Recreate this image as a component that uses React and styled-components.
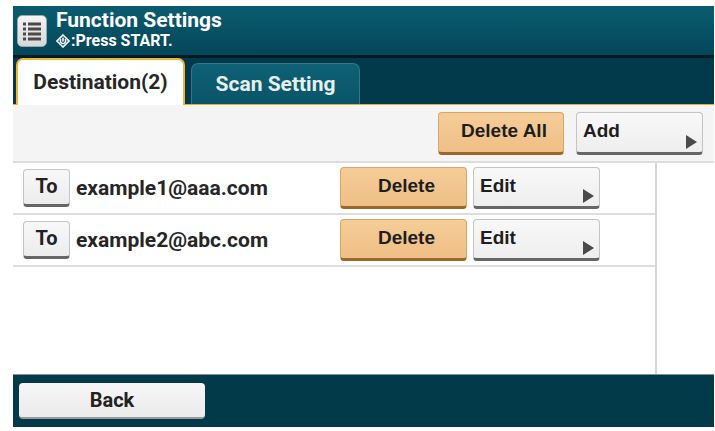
import React from 'react';
import styled, { createGlobalStyle } from 'styled-components';

const GlobalStyle = createGlobalStyle`
    body {
        margin: 0;
        background: #ffffff;
        font-family: Roboto, "Liberation Sans", Arial, sans-serif;
    }
`;

const destinations = [
    { id: 1, address: 'example1@aaa.com' },
    { id: 2, address: 'example2@abc.com' },
];

const MenuIcon = () => (
    <svg width="22" height="22" viewBox="0 0 22 22">
        {[4, 9, 14, 19].map(y => (
            <g key={y} fill="#4a4a4a">
                <rect x="2" y={y - 1.5} width="3" height="3" />
                <rect x="7" y={y - 1.5} width="13" height="3" />
            </g>
        ))}
    </svg>
);

const StartIcon = () => (
    <svg width="14" height="14" viewBox="0 0 14 14">
        <path d="M7 1 L13 7 L7 13 L1 7 Z" fill="none" stroke="#fff" strokeWidth="1.6" />
        <path d="M5 5.2 A2.6 2.6 0 1 0 9 5.2" fill="none" stroke="#fff" strokeWidth="1.4" />
        <path d="M7 3.8 V7.6" stroke="#fff" strokeWidth="1.6" />
    </svg>
);

const Arrow = () => (
    <ArrowMark width="11" height="14" viewBox="0 0 11 14">
        <path d="M0 0 L11 7 L0 14 Z" fill="#4a4a4a" />
    </ArrowMark>
);

const App = () => {
    return (
        <>
            <GlobalStyle />
            <Screen>
                <Header>
                    <HeaderIcon><MenuIcon /></HeaderIcon>
                    <Titles>
                        <Title>Function Settings</Title>
                        <Subtitle><StartIcon />:Press START.</Subtitle>
                    </Titles>
                </Header>
                <TabBar>
                    <Tab active>Destination(2)</Tab>
                    <Tab>Scan Setting</Tab>
                </TabBar>
                <Toolbar>
                    <Button tone="orange" width={126} align="center">Delete All</Button>
                    <Button width={127}>Add<Arrow /></Button>
                </Toolbar>
                <Content>
                    <List>
                        {destinations.map(d => (
                            <Row key={d.id}>
                                <ToButton>To</ToButton>
                                <Address>{d.address}</Address>
                                <Button tone="orange" width={127} height={42} align="center">Delete</Button>
                                <Button width={127} height={42}>Edit<Arrow /></Button>
                            </Row>
                        ))}
                    </List>
                    <Track />
                </Content>
                <Footer>
                    <BackButton>Back</BackButton>
                </Footer>
            </Screen>
        </>
    );
};

export default App;

const Screen = styled.div`
    margin: 6px 0 0 13px;
    width: 701px;
    height: 421px;
    display: flex;
    flex-direction: column;
    background: #fff;
`;

const Header = styled.div`
    height: 49px;
    display: flex;
    align-items: center;
    gap: 9px;
    padding-left: 4px;
    background: linear-gradient(#0b5c6f, #04465a);
    border-bottom: 3px solid #021a24;
`;

const HeaderIcon = styled.div`
    width: 30px;
    height: 32px;
    box-sizing: border-box;
    border-radius: 5px;
    background: linear-gradient(#f4f4f4, #d8d8d8);
    border: 1px solid #9aa;
    display: flex;
    align-items: center;
    justify-content: center;
`;

const Titles = styled.div`
    align-self: flex-start;
    margin-top: 2px;
    display: flex;
    flex-direction: column;
    color: #fff;
`;

const Title = styled.span`
    font-size: 21px;
    font-weight: bold;
    line-height: 24px;
`;

const Subtitle = styled.span`
    display: flex;
    align-items: center;
    font-size: 16px;
    font-weight: bold;
    line-height: 18px;
    svg {
        margin-right: 1px;
    }
`;

const TabBar = styled.div`
    height: 46px;
    display: flex;
    align-items: flex-end;
    gap: 6px;
    padding-left: 3px;
    background: #033a4b;
    border-bottom: 1px solid #e8aa38;
`;

const Tab = styled.div`
    box-sizing: border-box;
    width: 169px;
    height: ${props => props.active ? 47 : 41}px;
    margin-bottom: ${props => props.active ? -1 : 0}px;
    display: flex;
    align-items: center;
    justify-content: center;
    padding-bottom: ${props => props.active ? 2 : 0}px;
    border-radius: 7px 7px 0 0;
    border: ${props => props.active ? '2px solid #f0b23a' : '1px solid #32788a'};
    border-bottom: none;
    background: ${props => props.active ? '#ffffff' : 'linear-gradient(#0e6175, #0a5468)'};
    color: ${props => props.active ? '#262626' : '#e6eef0'};
    font-size: 21px;
    font-weight: bold;
`;

const Toolbar = styled.div`
    height: 56px;
    display: flex;
    align-items: center;
    justify-content: flex-end;
    gap: 12px;
    padding-right: 11px;
    background: #f4f4f4;
    border-bottom: 2px solid #dcdcdc;
`;

const Button = styled.div`
    position: relative;
    box-sizing: border-box;
    width: ${props => props.width}px;
    height: ${props => props.height || 43}px;
    display: flex;
    align-items: center;
    justify-content: ${props => props.align === 'center' ? 'center' : 'flex-start'};
    padding: 0 0 2px 6px;
    border-radius: 4px;
    border: 1px solid ${props => props.tone === 'orange' ? '#d9a765' : '#c4c4c4'};
    border-bottom: 3px solid ${props => props.tone === 'orange' ? '#9a6828' : '#666666'};
    background: ${props => props.tone === 'orange' ? 'linear-gradient(#f5cc98, #efbf86)' : 'linear-gradient(#f8f8f8, #eeeeee)'};
    color: #1e1e1e;
    font-family: "Liberation Sans", Arial, sans-serif;
    font-size: 19px;
    font-weight: bold;
`;

const ArrowMark = styled.svg`
    position: absolute;
    right: 5px;
    bottom: 3px;
`;

const Content = styled.div`
    flex: 1;
    display: flex;
`;

const List = styled.div`
    width: 642px;
    display: flex;
    flex-direction: column;
`;

const Row = styled.div`
    height: 50px;
    display: flex;
    align-items: center;
    gap: 6px;
    padding: 0 55px 0 10px;
    border-bottom: 2px solid #dedede;
`;

const ToButton = styled.div`
    box-sizing: border-box;
    width: 47px;
    height: 38px;
    display: flex;
    align-items: center;
    justify-content: center;
    padding-bottom: 2px;
    border-radius: 4px;
    border: 1px solid #c4c4c4;
    border-bottom: 3px solid #666666;
    background: linear-gradient(#f8f8f8, #ececec);
    color: #222;
    font-size: 20px;
    font-weight: bold;
`;

const Address = styled.span`
    flex: 1;
    color: #262626;
    font-size: 21px;
    font-weight: bold;
`;

const Track = styled.div`
    flex: 1;
    border-left: 2px solid #d6d6d6;
`;

const Footer = styled.div`
    height: 52px;
    display: flex;
    align-items: center;
    padding-left: 6px;
    background: #033a4a;
    border-top: 1px solid #7d959c;
`;

const BackButton = styled.div`
    box-sizing: border-box;
    width: 186px;
    height: 36px;
    display: flex;
    align-items: center;
    justify-content: center;
    border-radius: 4px;
    background: linear-gradient(#f6f6f6, #ebebeb);
    border-bottom: 2px solid #9a9a9a;
    color: #222;
    font-size: 20px;
    font-weight: bold;
`;
